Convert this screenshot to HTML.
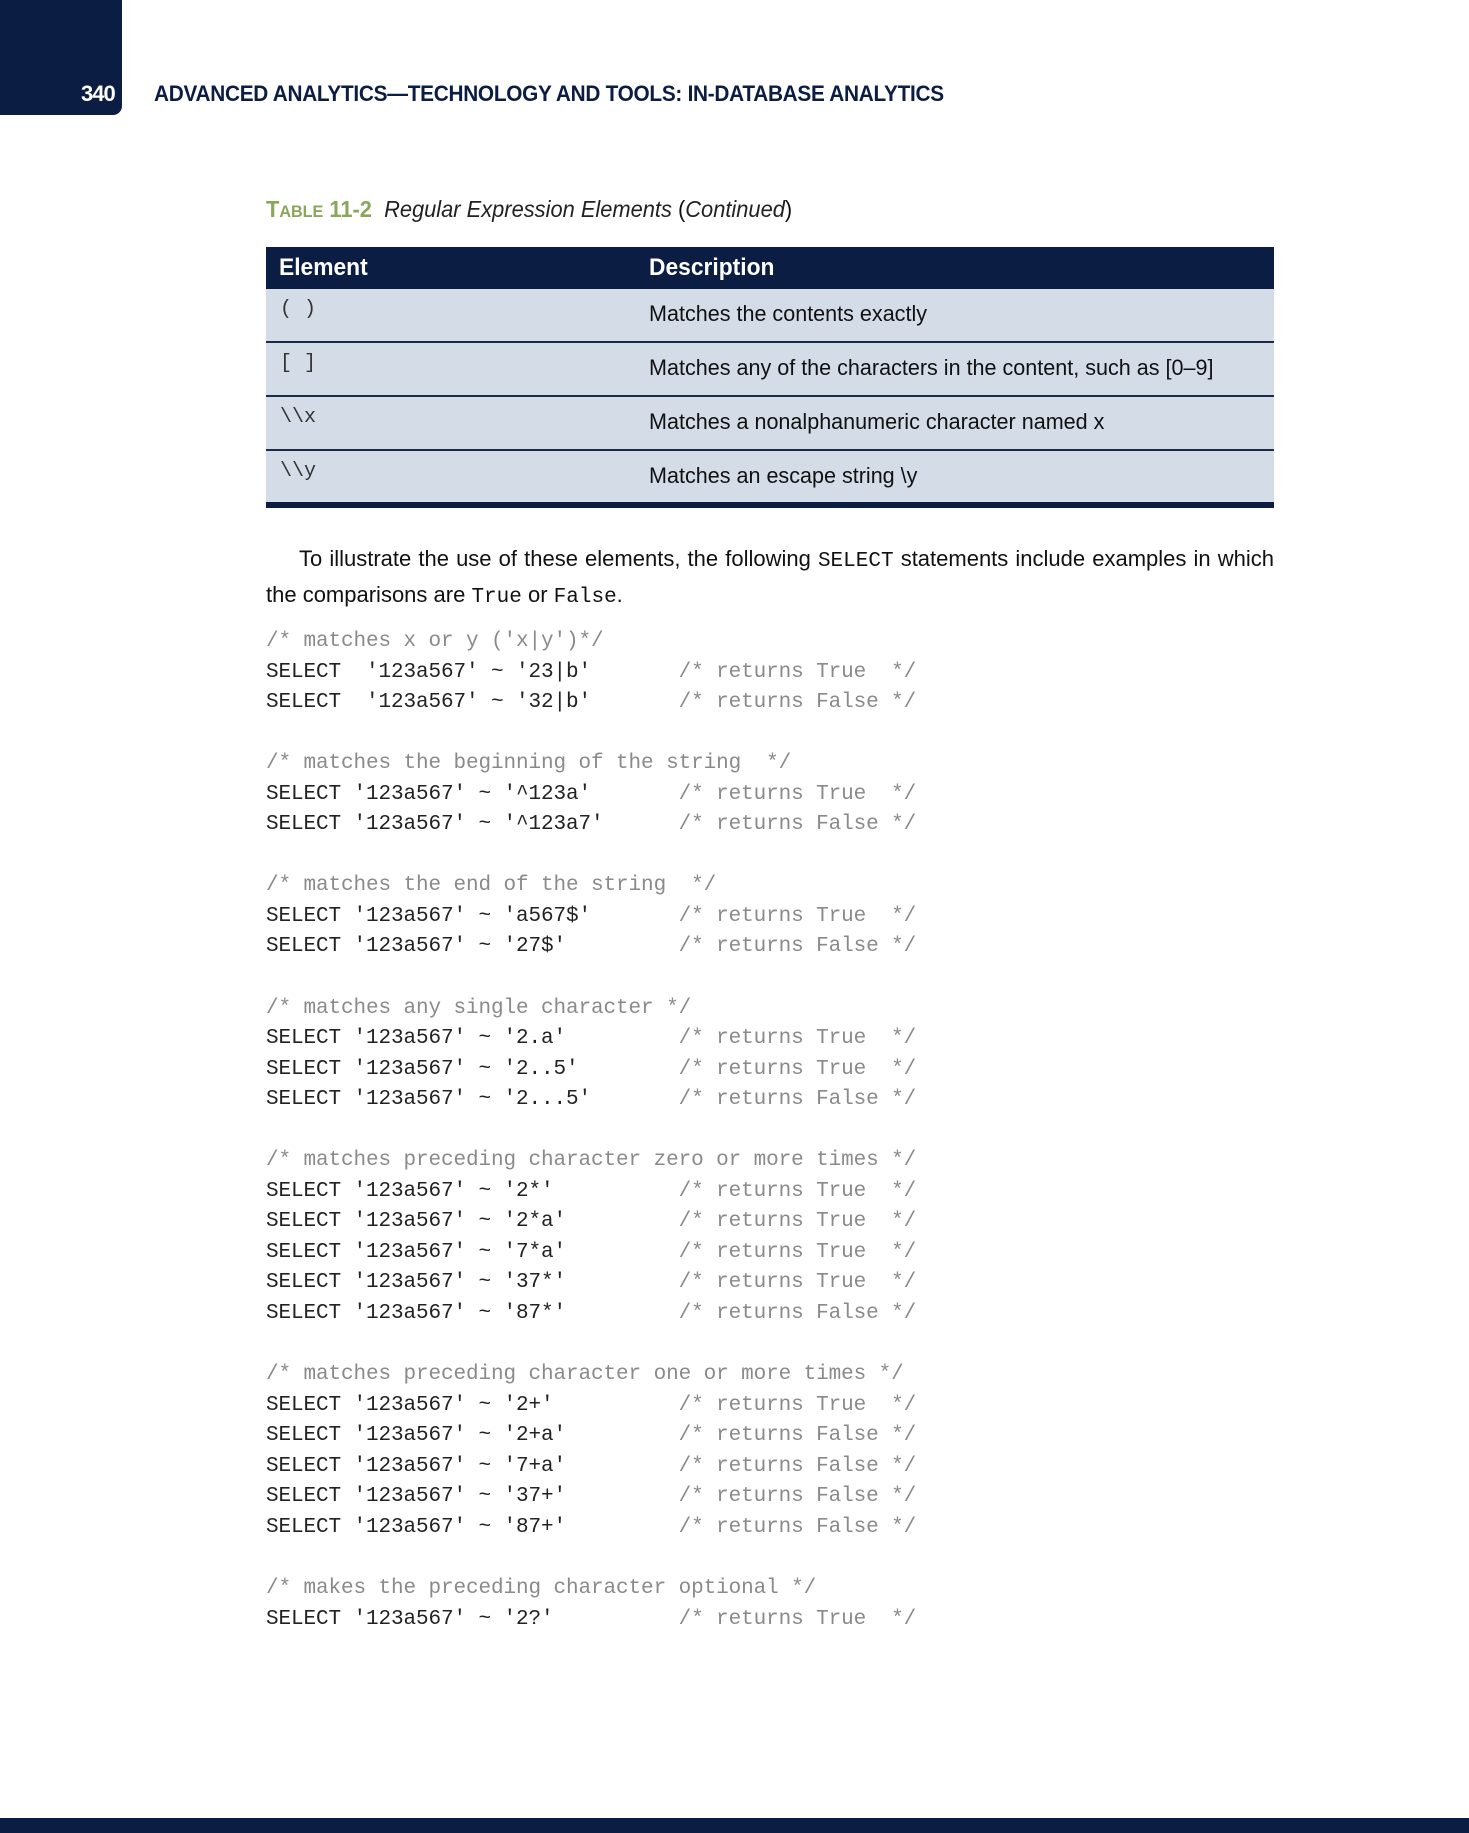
<!DOCTYPE html>
<html><head><meta charset="utf-8"><style>
html,body{margin:0;padding:0;background:#fff;}
body{width:1469px;height:1833px;position:relative;overflow:hidden;font-family:"Liberation Sans",sans-serif;color:#111;}
.tab{position:absolute;left:0;top:0;width:122px;height:115px;background:#0b1d42;border-bottom-right-radius:9px;}
.pn{position:absolute;left:81px;top:81px;color:#fff;font-weight:bold;font-size:22px;letter-spacing:-1px;}
.title{position:absolute;left:154px;top:81px;color:#0b1d42;font-weight:bold;font-size:22px;white-space:nowrap;transform:scaleX(0.945);transform-origin:left top;letter-spacing:-0.3px;}
.cap{position:absolute;left:266px;top:196px;font-size:23px;white-space:nowrap;transform:scaleX(0.95);transform-origin:left top;}
.cap b{color:#8aa65a;font-weight:bold;}
.cap b small{font-size:17px;}
.cap i{color:#222;}
.tbl{position:absolute;left:266px;top:247px;width:1008px;}
.th{height:42px;background:#0b1d42;color:#fff;font-weight:bold;font-size:24px;position:relative;}
.th span{position:absolute;top:7px;transform:scaleX(0.95);transform-origin:left top;}
.row{height:52px;background:#d4dce7;border-bottom:2px solid #1b2b48;position:relative;}
.row.last{border-bottom:6px solid #0b1d42;height:51px;}
.row .e{position:absolute;left:14px;top:9px;font-family:"Liberation Mono",monospace;font-size:20px;color:#333;}
.row .d{position:absolute;left:383px;top:12px;font-size:22px;white-space:nowrap;transform:scaleX(0.98);transform-origin:left top;color:#111;}
.para{position:absolute;left:266px;top:542px;width:1008px;font-size:22px;line-height:33px;}
.para .l1{display:block;text-indent:33px;text-align:justify;text-align-last:justify;white-space:nowrap;}
.para code{font-family:"Liberation Mono",monospace;font-size:21px;}
pre{position:absolute;left:266px;top:627px;margin:0;font-family:"Liberation Mono",monospace;font-size:21px;line-height:30.55px;letter-spacing:-0.1px;color:#222;}
.c{color:#8a8a8a;}
.bot{position:absolute;left:0;top:1818px;width:1469px;height:15px;background:#0b1d42;}
</style></head><body>
<div class="tab"></div>
<div class="pn">340</div>
<div class="title">ADVANCED ANALYTICS—TECHNOLOGY AND TOOLS: IN-DATABASE ANALYTICS</div>
<div class="cap"><b>T<small>ABLE</small> 11-2</b>&nbsp; <i>Regular Expression Elements</i> (<i>Continued</i>)</div>
<div class="tbl">
<div class="th"><span style="left:13px">Element</span><span style="left:383px">Description</span></div>
<div class="row"><span class="e">( )</span><span class="d">Matches the contents exactly</span></div>
<div class="row"><span class="e">[ ]</span><span class="d">Matches any of the characters in the content, such as [0–9]</span></div>
<div class="row"><span class="e">\\x</span><span class="d">Matches a nonalphanumeric character named x</span></div>
<div class="row last"><span class="e">\\y</span><span class="d">Matches an escape string \y</span></div>
</div>
<div class="para"><span class="l1">To illustrate the use of these elements, the following <code>SELECT</code> statements include examples in which</span>the comparisons are <code>True</code> or <code>False</code>.</div>
<pre><span class="c">/* matches x or y ('x|y')*/</span>
SELECT  '123a567' ~ '23|b'       <span class="c">/* returns True  */</span>
SELECT  '123a567' ~ '32|b'       <span class="c">/* returns False */</span>

<span class="c">/* matches the beginning of the string  */</span>
SELECT '123a567' ~ '^123a'       <span class="c">/* returns True  */</span>
SELECT '123a567' ~ '^123a7'      <span class="c">/* returns False */</span>

<span class="c">/* matches the end of the string  */</span>
SELECT '123a567' ~ 'a567$'       <span class="c">/* returns True  */</span>
SELECT '123a567' ~ '27$'         <span class="c">/* returns False */</span>

<span class="c">/* matches any single character */</span>
SELECT '123a567' ~ '2.a'         <span class="c">/* returns True  */</span>
SELECT '123a567' ~ '2..5'        <span class="c">/* returns True  */</span>
SELECT '123a567' ~ '2...5'       <span class="c">/* returns False */</span>

<span class="c">/* matches preceding character zero or more times */</span>
SELECT '123a567' ~ '2*'          <span class="c">/* returns True  */</span>
SELECT '123a567' ~ '2*a'         <span class="c">/* returns True  */</span>
SELECT '123a567' ~ '7*a'         <span class="c">/* returns True  */</span>
SELECT '123a567' ~ '37*'         <span class="c">/* returns True  */</span>
SELECT '123a567' ~ '87*'         <span class="c">/* returns False */</span>

<span class="c">/* matches preceding character one or more times */</span>
SELECT '123a567' ~ '2+'          <span class="c">/* returns True  */</span>
SELECT '123a567' ~ '2+a'         <span class="c">/* returns False */</span>
SELECT '123a567' ~ '7+a'         <span class="c">/* returns False */</span>
SELECT '123a567' ~ '37+'         <span class="c">/* returns False */</span>
SELECT '123a567' ~ '87+'         <span class="c">/* returns False */</span>

<span class="c">/* makes the preceding character optional */</span>
SELECT '123a567' ~ '2?'          <span class="c">/* returns True  */</span></pre>
<div class="bot"></div>
</body></html>
